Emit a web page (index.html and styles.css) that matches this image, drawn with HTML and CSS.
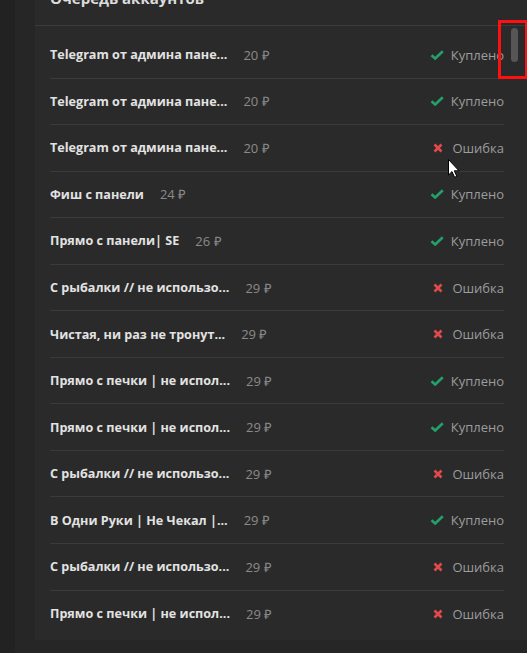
FILE: index.html
```html
<!DOCTYPE html>
<html lang="ru">
<head>
<meta charset="utf-8">
<link rel="stylesheet" href="styles.css">
</head>
<body>
<div class="page">
  <div class="strip"></div>
  <div class="main">
    <section class="panel">
      <h2 class="title">Очередь аккаунтов</h2>
      <ul class="list">
        <li class="row"><span class="name">Telegram от админа пане...</span><span class="price">20 ₽</span><span class="status ok"><svg class="ic" viewBox="0 0 14 10"><path d="M1.5 5.2 L5.2 8.5 L12.8 1.3"/></svg>Куплено</span></li>
        <li class="row"><span class="name">Telegram от админа пане...</span><span class="price">20 ₽</span><span class="status ok"><svg class="ic" viewBox="0 0 14 10"><path d="M1.5 5.2 L5.2 8.5 L12.8 1.3"/></svg>Куплено</span></li>
        <li class="row"><span class="name">Telegram от админа пане...</span><span class="price">20 ₽</span><span class="status err"><svg class="ic" viewBox="0 0 10 10"><path d="M1.5 1.5 L8.5 8.5 M8.5 1.5 L1.5 8.5"/></svg>Ошибка</span></li>
        <li class="row"><span class="name">Фиш с панели</span><span class="price">24 ₽</span><span class="status ok"><svg class="ic" viewBox="0 0 14 10"><path d="M1.5 5.2 L5.2 8.5 L12.8 1.3"/></svg>Куплено</span></li>
        <li class="row"><span class="name">Прямо с панели| SE</span><span class="price">26 ₽</span><span class="status ok"><svg class="ic" viewBox="0 0 14 10"><path d="M1.5 5.2 L5.2 8.5 L12.8 1.3"/></svg>Куплено</span></li>
        <li class="row"><span class="name">С рыбалки // не использо...</span><span class="price">29 ₽</span><span class="status err"><svg class="ic" viewBox="0 0 10 10"><path d="M1.5 1.5 L8.5 8.5 M8.5 1.5 L1.5 8.5"/></svg>Ошибка</span></li>
        <li class="row"><span class="name">Чистая, ни раз не тронут...</span><span class="price">29 ₽</span><span class="status err"><svg class="ic" viewBox="0 0 10 10"><path d="M1.5 1.5 L8.5 8.5 M8.5 1.5 L1.5 8.5"/></svg>Ошибка</span></li>
        <li class="row"><span class="name">Прямо с печки | не испол...</span><span class="price">29 ₽</span><span class="status ok"><svg class="ic" viewBox="0 0 14 10"><path d="M1.5 5.2 L5.2 8.5 L12.8 1.3"/></svg>Куплено</span></li>
        <li class="row"><span class="name">Прямо с печки | не испол...</span><span class="price">29 ₽</span><span class="status ok"><svg class="ic" viewBox="0 0 14 10"><path d="M1.5 5.2 L5.2 8.5 L12.8 1.3"/></svg>Куплено</span></li>
        <li class="row"><span class="name">С рыбалки // не использо...</span><span class="price">29 ₽</span><span class="status err"><svg class="ic" viewBox="0 0 10 10"><path d="M1.5 1.5 L8.5 8.5 M8.5 1.5 L1.5 8.5"/></svg>Ошибка</span></li>
        <li class="row"><span class="name">В Одни Руки | Не Чекал |...</span><span class="price">29 ₽</span><span class="status ok"><svg class="ic" viewBox="0 0 14 10"><path d="M1.5 5.2 L5.2 8.5 L12.8 1.3"/></svg>Куплено</span></li>
        <li class="row"><span class="name">С рыбалки // не использо...</span><span class="price">29 ₽</span><span class="status err"><svg class="ic" viewBox="0 0 10 10"><path d="M1.5 1.5 L8.5 8.5 M8.5 1.5 L1.5 8.5"/></svg>Ошибка</span></li>
        <li class="row"><span class="name">Прямо с печки | не испол...</span><span class="price">29 ₽</span><span class="status err"><svg class="ic" viewBox="0 0 10 10"><path d="M1.5 1.5 L8.5 8.5 M8.5 1.5 L1.5 8.5"/></svg>Ошибка</span></li>
      </ul>
    </section>
  </div>
</div>
<div class="thumb"></div>
<div class="highlight"></div>
<svg class="cursor" viewBox="0 0 12 19"><path d="M0.5 0.5 L0.5 16 L4 12.6 L6.6 18.3 L8.8 17.3 L6.3 11.8 L11 11.8 Z"/></svg>
</body>
</html>
```
FILE: styles.css
```css
html, body {
  margin: 0;
  padding: 0;
  height: 100%;
  overflow: hidden;
}
body {
  background: #262626;
  font-family: "Open Sans", "Liberation Sans", sans-serif;
  position: relative;
}
.page {
  display: flex;
  height: 100%;
}
.strip {
  width: 15px;
  background: #222222;
  flex: none;
}
.main {
  flex: 1;
  padding-left: 20px;
  background: #262626;
}
.panel {
  background: #2a2a2a;
  margin-top: -14px;
  padding-bottom: 3px;
}
.title {
  margin: 0;
  height: 40px;
  box-sizing: border-box;
  padding: 2px 0 0 15px;
  font-size: 15px;
  font-weight: 700;
  line-height: 20px;
  color: #dcdcdc;
  border-bottom: 1px solid #3a3a3a;
}
.list {
  list-style: none;
  margin: 0;
  padding: 6px 23px 0 15px;
}
.row {
  display: flex;
  align-items: center;
  height: 46.55px;
  box-sizing: border-box;
  border-bottom: 1px solid #3a3a3a;
  font-size: 12.6px;
}
.row:last-child {
  border-bottom: none;
}
.name {
  font-weight: 700;
  color: #e2e2e2;
  white-space: nowrap;
}
.price {
  margin-left: 16px;
  color: #8a8a8a;
  font-size: 13px;
}
.status {
  margin-left: auto;
  display: flex;
  align-items: center;
  color: #9c9c9c;
  font-size: 13px;
}
.ic {
  fill: none;
  stroke-width: 2.6;
}
.ok .ic {
  width: 14px;
  height: 10px;
  margin-right: 7px;
  stroke: #23a06c;
}
.err .ic {
  width: 10px;
  height: 10px;
  margin-right: 9px;
  stroke: #e04a4d;
}
.thumb {
  position: absolute;
  left: 511px;
  top: 28px;
  width: 7px;
  height: 34px;
  border-radius: 4px;
  background: #565656;
}
.highlight {
  position: absolute;
  left: 498px;
  top: 20px;
  width: 30px;
  height: 59px;
  box-sizing: border-box;
  border: 3px solid #ff1010;
}
.cursor {
  position: absolute;
  left: 448px;
  top: 159px;
  width: 12px;
  height: 19px;
  fill: #ffffff;
  stroke: #000000;
  stroke-width: 1;
}
```
